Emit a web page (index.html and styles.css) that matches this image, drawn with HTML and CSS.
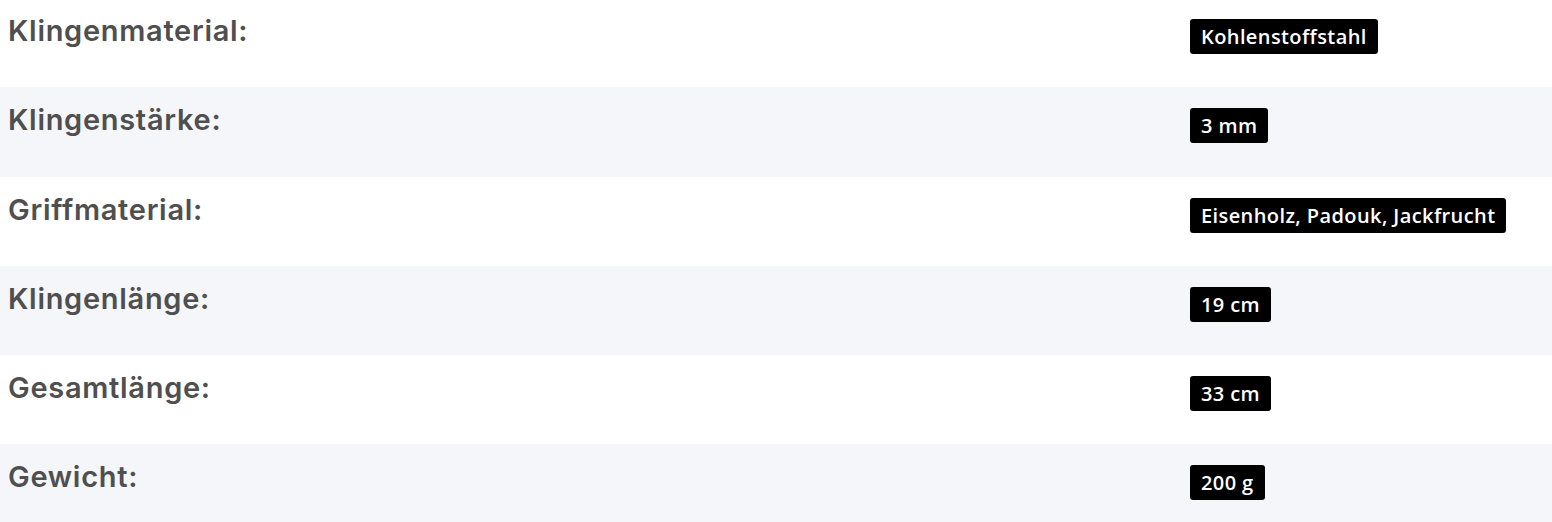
FILE: index.html
```html
<!DOCTYPE html>
<html lang="de">
<head>
    <meta charset="UTF-8">
    <meta name="viewport" content="width=device-width, initial-scale=1.0">
    <title>Technische Daten</title>
    <link rel="stylesheet" href="styles.css">
</head>
<body>

<div class="specs">
    <div class="spec-row">
        <div class="spec-label">Klingenmaterial:</div>
        <div class="spec-value"><span class="badge">Kohlenstoffstahl</span></div>
    </div>
    <div class="spec-row">
        <div class="spec-label">Klingenstärke:</div>
        <div class="spec-value"><span class="badge">3 mm</span></div>
    </div>
    <div class="spec-row">
        <div class="spec-label">Griffmaterial:</div>
        <div class="spec-value"><span class="badge">Eisenholz, Padouk, Jackfrucht</span></div>
    </div>
    <div class="spec-row">
        <div class="spec-label">Klingenlänge:</div>
        <div class="spec-value"><span class="badge">19 cm</span></div>
    </div>
    <div class="spec-row">
        <div class="spec-label">Gesamtlänge:</div>
        <div class="spec-value"><span class="badge">33 cm</span></div>
    </div>
    <div class="spec-row">
        <div class="spec-label">Gewicht:</div>
        <div class="spec-value"><span class="badge">200 g</span></div>
    </div>
</div>

</body>
</html>
```

FILE: styles.css
```css
/* Technische Daten */
* {
    box-sizing: border-box;
    margin: 0;
    padding: 0;
}

body {
    font-family: 'Open Sans', sans-serif;
    background-color: #fff;
    color: #4f4f4f;
}

.specs {
    margin-top: -2px;
}

.spec-row {
    display: grid;
    grid-template-columns: 1fr 370px;
    height: 89.25px;
    padding: 15px 0;
}

.spec-row:nth-child(even) {
    background-color: #f5f6fa;
}

.spec-label {
    padding: 0 8px;
    font-family: 'Inter', sans-serif;
    font-weight: 600;
    font-size: 29px;
    line-height: 35px;
    letter-spacing: 0.7px;
    color: #4f4f4f;
}

.spec-value {
    padding: 0 8px;
}

.badge {
    display: inline-block;
    margin-top: 6px;
    background-color: #000;
    color: #fff;
    font-family: 'Open Sans', sans-serif;
    font-weight: 600;
    font-size: 20px;
    line-height: 27px;
    letter-spacing: 0.4px;
    padding: 4px 11px;
    border-radius: 3px;
}
```
